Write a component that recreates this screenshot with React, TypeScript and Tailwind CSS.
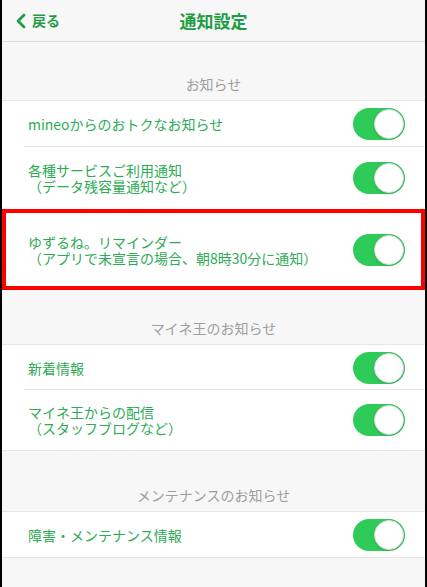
const font = { fontFamily: '"Noto Sans CJK JP", "Noto Sans", sans-serif' };

function Toggle() {
    return (
        <div className="w-[52px] h-[32px] rounded-full bg-[#2fcb58] flex items-center justify-end p-[1px] shrink-0">
            <div className="w-[30px] h-[30px] rounded-full bg-white border border-[#d9d9d9] shadow-sm" />
        </div>
    );
}

interface RowProps {
    lines: string[];
    height: string;
    divider?: boolean;
    pad?: string;
}

function Row({ lines, height, divider, pad = "pl-[26px] pr-[20px]" }: RowProps) {
    return (
        <div className={`bg-white ${height} ${pad} flex items-center relative`}>
            <div className="flex-1 text-[14px] leading-[16px] text-[#2eac55]">
                {lines.map((l) => (
                    <div key={l}>{l}</div>
                ))}
            </div>
            <Toggle />
            {divider && <div className="absolute left-[22px] right-0 bottom-0 h-px bg-[#e4e4e4]" />}
        </div>
    );
}

function SectionLabel({ label, height }: { label: string; height: string }) {
    return (
        <div className={`${height} flex items-end justify-center pb-[5px] border-b border-[#e6e6e6] text-[14px] text-[#9e9e9e]`}>
            {label}
        </div>
    );
}

export default function App() {
    return (
        <div className="w-[427px] h-[587px] bg-[#f7f7f7] border-x-2 border-black overflow-hidden" style={font}>
            <div className="h-[42px] border-b border-[#dcdcdc] flex items-center relative">
                <div className="absolute left-[12px] flex items-center gap-[4px] text-[#1e9e44]">
                    <svg width="14" height="16" viewBox="0 0 14 16" fill="none">
                        <path d="M10 2 L4 8 L10 14" stroke="currentColor" strokeWidth="2.8" strokeLinecap="round" strokeLinejoin="round" />
                    </svg>
                    <span className="text-[14px] font-bold">戻る</span>
                </div>
                <div className="w-full text-center text-[17px] font-bold text-[#1e9e44]">通知設定</div>
            </div>

            <SectionLabel label="お知らせ" height="h-[59px]" />
            <Row lines={["mineoからのおトクなお知らせ"]} height="h-[46px]" divider />
            <Row lines={["各種サービスご利用通知", "（データ残容量通知など）"]} height="h-[62px]" />
            <div className="border-4 border-[#ff0000]">
                <Row
                    lines={["ゆずるね。リマインダー", "（アプリで未宣言の場合、朝8時30分に通知）"]}
                    height="h-[73px]"
                    pad="pl-[22px] pr-[16px]"
                />
            </div>

            <SectionLabel label="マイネ王のお知らせ" height="h-[55px]" />
            <Row lines={["新着情報"]} height="h-[45px]" divider />
            <Row lines={["マイネ王からの配信", "（スタッフブログなど）"]} height="h-[60px]" />
            <div className="h-px bg-[#e6e6e6]" />

            <SectionLabel label="メンテナンスのお知らせ" height="h-[61px]" />
            <Row lines={["障害・メンテナンス情報"]} height="h-[45px]" />
            <div className="h-px bg-[#e6e6e6]" />
        </div>
    );
}
